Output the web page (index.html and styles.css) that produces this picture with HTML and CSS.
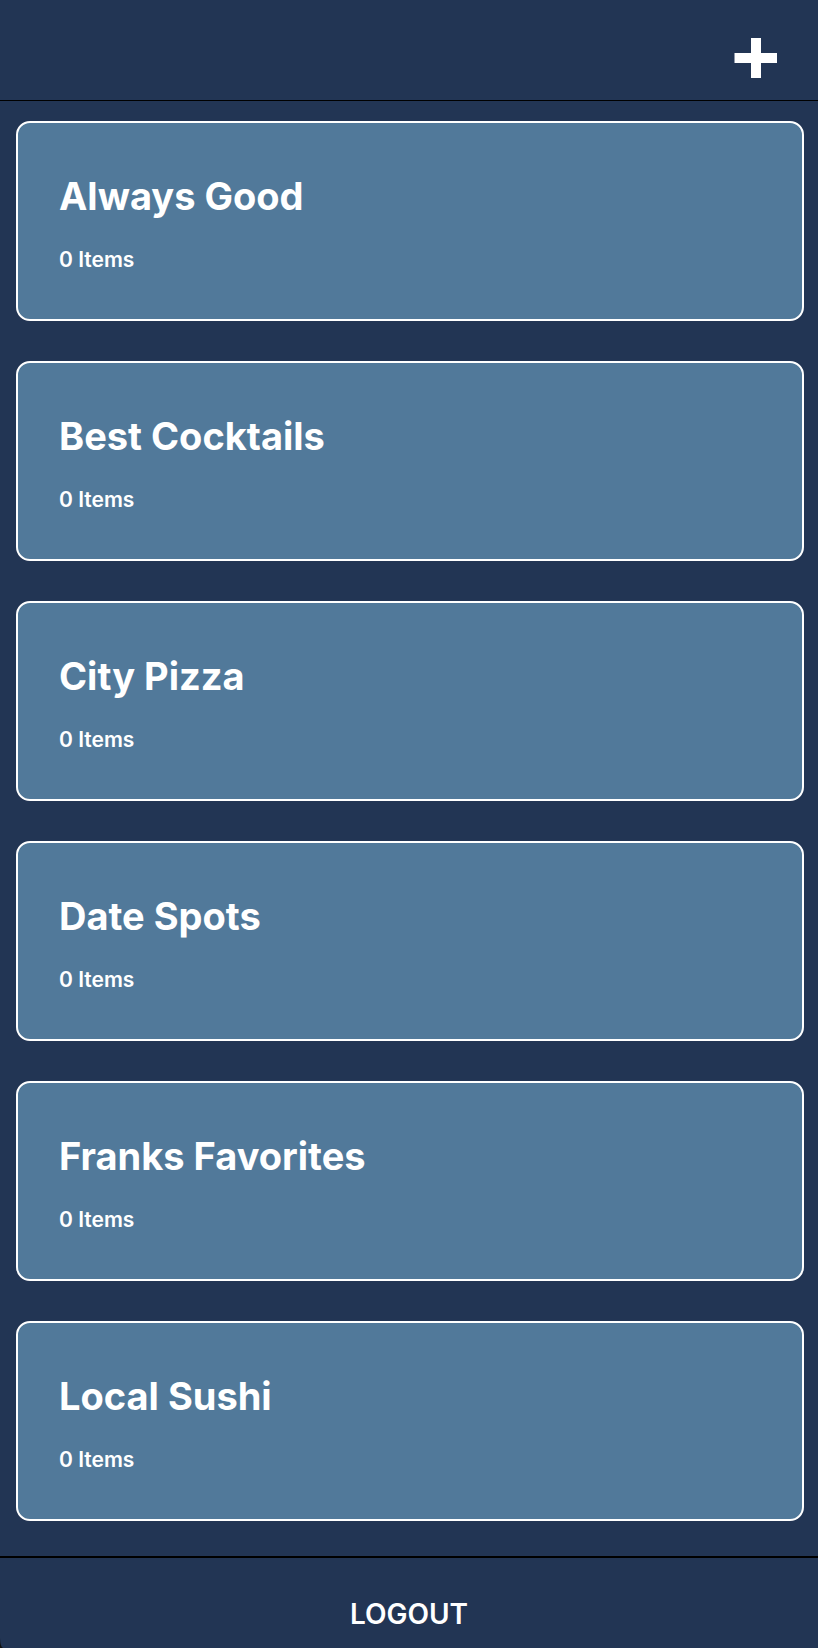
FILE: index.html
```html
<!DOCTYPE html>
<html lang="en">
<head>
<meta charset="utf-8">
<meta name="viewport" content="width=device-width, initial-scale=1">
<title>Lists</title>
<link rel="stylesheet" href="styles.css">
</head>
<body>
<div class="app">
  <header class="topbar">
    <button class="add" type="button" aria-label="Add list">
      <svg class="add-icon" viewBox="0 0 43 40" aria-hidden="true"><path d="M17 0h10v15h16v10H27v15H17V25H0.500V15H17z" fill="currentColor"/></svg>
    </button>
  </header>
  <main class="lists">
    <a class="card" href="#always-good"><h2 class="card-title">Always Good</h2><p class="card-count">0 Items</p></a>
    <a class="card" href="#best-cocktails"><h2 class="card-title">Best Cocktails</h2><p class="card-count">0 Items</p></a>
    <a class="card" href="#city-pizza"><h2 class="card-title">City Pizza</h2><p class="card-count">0 Items</p></a>
    <a class="card" href="#date-spots"><h2 class="card-title">Date Spots</h2><p class="card-count">0 Items</p></a>
    <a class="card" href="#franks-favorites"><h2 class="card-title">Franks Favorites</h2><p class="card-count">0 Items</p></a>
    <a class="card" href="#local-sushi"><h2 class="card-title">Local Sushi</h2><p class="card-count">0 Items</p></a>
  </main>
  <footer class="bottombar">
    <button class="logout" type="button">LOGOUT</button>
  </footer>
</div>
</body>
</html>
```
FILE: styles.css
```css
* {
  box-sizing: border-box;
}

html {
  background: #111;
}

body {
  margin: 0;
  font-family: Inter, Roboto, sans-serif;
  color: #fff;
}

.app {
  display: flex;
  flex-direction: column;
  min-height: 100vh;
  background: #223554;
  border-bottom-left-radius: 3px 10px;
}

.topbar {
  display: flex;
  justify-content: flex-end;
  padding: 38px 41px 22px;
  border-bottom: 1px solid #000;
}

.add,
.logout {
  padding: 0;
  border: 0;
  background: none;
  color: inherit;
  font-family: inherit;
  cursor: pointer;
}

.add-icon {
  display: block;
  width: 43px;
  height: 40px;
}

.lists {
  display: flex;
  flex: 1;
  flex-direction: column;
  gap: 40px;
  padding: 20px 14px 35px 16px;
}

.card {
  display: flex;
  flex-direction: column;
  gap: 28px;
  padding: 49px 41px 47px;
  border: 2px solid #fff;
  border-radius: 14px;
  background: #51799a;
  color: inherit;
  text-decoration: none;
}

.card-title {
  margin: 0;
  font-size: 38px;
  font-weight: 700;
  line-height: 48px;
}

.card-count {
  margin: 0;
  font-size: 21px;
  font-weight: 600;
  line-height: 24px;
}

.bottombar {
  display: flex;
  justify-content: center;
  padding: 40px 16px 18px;
  border-top: 2px solid #000;
}

.logout {
  font-size: 28px;
  font-weight: 600;
  line-height: 32px;
}
```
